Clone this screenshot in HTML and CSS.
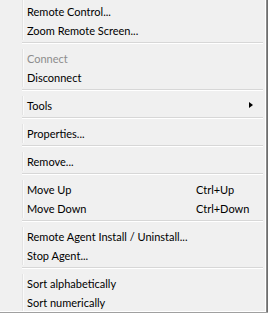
FILE: index.html
```html
<!DOCTYPE html>
<html>
  <head>
    <title>Context Menu</title>
    <link rel="stylesheet" href="styles.css">
  </head>
  <body>
    <div class="menu">
      <div class="item">Remote Control...</div>
      <div class="item">Zoom Remote Screen...</div>
      <div class="separator"></div>
      <div class="item disabled">Connect</div>
      <div class="item">Disconnect</div>
      <div class="separator"></div>
      <div class="item">Tools<span class="arrow"></span></div>
      <div class="separator"></div>
      <div class="item">Properties...</div>
      <div class="separator"></div>
      <div class="item">Remove...</div>
      <div class="separator"></div>
      <div class="item">Move Up<span class="shortcut">Ctrl+Up</span></div>
      <div class="item">Move Down<span class="shortcut">Ctrl+Down</span></div>
      <div class="separator"></div>
      <div class="item">Remote Agent Install / Uninstall...</div>
      <div class="item">Stop Agent...</div>
      <div class="separator"></div>
      <div class="item">Sort alphabetically</div>
      <div class="item">Sort numerically</div>
    </div>
  </body>
</html>
```

FILE: styles.css
```css
body {
  margin: 0;
  font-family: Lato, sans-serif;
  font-size: 11px;
  color: #000;
  background-color: #a0a0a0;
}
.menu {
  box-sizing: border-box;
  width: 266px;
  height: 312px;
  padding-top: 2px;
  background-color: #f0f0f0;
  background-image: linear-gradient(to right, transparent 22px, #e3e3e3 22px, #e3e3e3 23px, #fafafa 23px, #fafafa 24px, transparent 24px);
  border-right: 1px solid #fff;
  border-bottom: 1px solid #fff;
  box-shadow: 1px 0 0 #8a8a8a, 2px 0 0 #6e6e6e, 0 1px 0 #a0a0a0;
}
.item {
  position: relative;
  height: 19px;
  line-height: 20px;
  padding-left: 27px;
  white-space: nowrap;
}
.disabled {
  color: #8d8d8d;
}
.shortcut {
  position: absolute;
  left: 196px;
  top: 0;
}
.arrow {
  position: absolute;
  left: 249px;
  top: 6px;
  width: 0;
  height: 0;
  border-top: 3.5px solid transparent;
  border-bottom: 3.5px solid transparent;
  border-left: 4px solid #000;
}
.separator {
  height: 9px;
  margin-left: 22px;
  margin-right: 2px;
  box-sizing: border-box;
  padding-top: 2px;
  background-color: #f0f0f0;
}
.separator::before {
  content: "";
  display: block;
  height: 1px;
  background-color: #d7d7d7;
  border-bottom: 1px solid #fff;
}
```
